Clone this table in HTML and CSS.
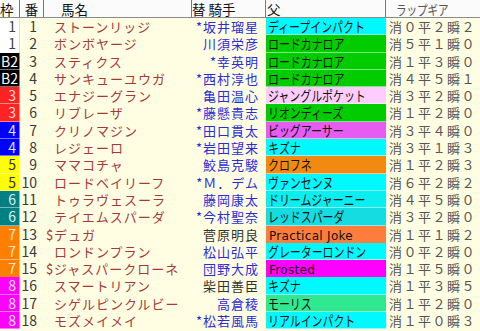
FILE: index.html
```html
<!DOCTYPE html>
<html lang="ja">
<head>
<meta charset="utf-8">
<link rel="stylesheet" href="styles.css">
</head>
<body>
<div class="table">
  <div class="row head">
    <div class="h waku-h">枠</div>
    <div class="h ban-h">番</div>
    <div class="h name-h">馬名</div>
    <div class="h jockey-h">替 騎手</div>
    <div class="h sire-h">父</div>
    <div class="h lap-h"><span class="narrow">ラップギア</span></div>
  </div>

  <div class="row"><div class="waku w1">1</div><div class="ban">1</div><div class="name"><span class="mk"></span>ストーンリッジ</div><div class="jockey">*坂井瑠星</div><div class="sire cyan"><span class="narrow">ディープインパクト</span></div><div class="lap">消０平２瞬２</div></div>
  <div class="row"><div class="waku w1">1</div><div class="ban">2</div><div class="name"><span class="mk"></span>ボンボヤージ</div><div class="jockey">川須栄彦</div><div class="sire green"><span class="narrow">ロードカナロア</span></div><div class="lap">消５平１瞬０</div></div>
  <div class="row"><div class="waku w2">B2</div><div class="ban">3</div><div class="name"><span class="mk"></span>スティクス</div><div class="jockey">*幸英明</div><div class="sire green"><span class="narrow">ロードカナロア</span></div><div class="lap">消１平３瞬０</div></div>
  <div class="row"><div class="waku w2">B2</div><div class="ban">4</div><div class="name"><span class="mk"></span>サンキューユウガ</div><div class="jockey">*西村淳也</div><div class="sire green"><span class="narrow">ロードカナロア</span></div><div class="lap">消４平５瞬１</div></div>
  <div class="row"><div class="waku w3">3</div><div class="ban">5</div><div class="name"><span class="mk"></span>エナジーグラン</div><div class="jockey">亀田温心</div><div class="sire pink"><span class="narrow">ジャングルポケット</span></div><div class="lap">消３平２瞬０</div></div>
  <div class="row"><div class="waku w3">3</div><div class="ban">6</div><div class="name"><span class="mk"></span>リブレーザ</div><div class="jockey">*藤懸貴志</div><div class="sire green"><span class="narrow">リオンディーズ</span></div><div class="lap">消１平２瞬０</div></div>
  <div class="row"><div class="waku w4">4</div><div class="ban">7</div><div class="name"><span class="mk"></span>クリノマジン</div><div class="jockey">*田口貫太</div><div class="sire violet"><span class="narrow">ビッグアーサー</span></div><div class="lap">消３平４瞬０</div></div>
  <div class="row"><div class="waku w4">4</div><div class="ban">8</div><div class="name"><span class="mk"></span>レジェーロ</div><div class="jockey">*岩田望来</div><div class="sire cyan"><span class="narrow">キズナ</span></div><div class="lap">消３平１瞬３</div></div>
  <div class="row"><div class="waku w5">5</div><div class="ban">9</div><div class="name"><span class="mk"></span>ママコチャ</div><div class="jockey">鮫島克駿</div><div class="sire orange"><span class="narrow">クロフネ</span></div><div class="lap">消１平２瞬３</div></div>
  <div class="row"><div class="waku w5">5</div><div class="ban">10</div><div class="name"><span class="mk"></span>ロードベイリーフ</div><div class="jockey">*Ｍ．デム</div><div class="sire cyan"><span class="narrow">ヴァンセンヌ</span></div><div class="lap">消６平２瞬２</div></div>
  <div class="row"><div class="waku w6">6</div><div class="ban">11</div><div class="name"><span class="mk"></span>トゥラヴェスーラ</div><div class="jockey">藤岡康太</div><div class="sire cyan2"><span class="narrow">ドリームジャーニー</span></div><div class="lap">消４平５瞬０</div></div>
  <div class="row"><div class="waku w6">6</div><div class="ban">12</div><div class="name"><span class="mk"></span>テイエムスパーダ</div><div class="jockey">*今村聖奈</div><div class="sire cyan3"><span class="narrow">レッドスパーダ</span></div><div class="lap">消３平２瞬０</div></div>
  <div class="row"><div class="waku w7">7</div><div class="ban">13</div><div class="name"><span class="mk">$</span>デュガ</div><div class="jockey black">菅原明良</div><div class="sire coral"><span class="latin">Practical Joke</span></div><div class="lap">消１平１瞬２</div></div>
  <div class="row"><div class="waku w7">7</div><div class="ban">14</div><div class="name"><span class="mk"></span>ロンドンプラン</div><div class="jockey">松山弘平</div><div class="sire cyan"><span class="narrow">グレーターロンドン</span></div><div class="lap">消０平２瞬０</div></div>
  <div class="row"><div class="waku w7">7</div><div class="ban">15</div><div class="name"><span class="mk">$</span>ジャスパークローネ</div><div class="jockey">団野大成</div><div class="sire magenta"><span class="latin">Frosted</span></div><div class="lap">消１平５瞬０</div></div>
  <div class="row"><div class="waku w8">8</div><div class="ban">16</div><div class="name"><span class="mk"></span>スマートリアン</div><div class="jockey black">柴田善臣</div><div class="sire cyan"><span class="narrow">キズナ</span></div><div class="lap">消１平３瞬５</div></div>
  <div class="row"><div class="waku w8">8</div><div class="ban">17</div><div class="name"><span class="mk"></span>シゲルピンクルビー</div><div class="jockey">高倉稜</div><div class="sire mint"><span class="narrow">モーリス</span></div><div class="lap">消１平２瞬０</div></div>
  <div class="row"><div class="waku w8">8</div><div class="ban">18</div><div class="name"><span class="mk"></span>モズメイメイ</div><div class="jockey">*松若風馬</div><div class="sire cyan"><span class="narrow">リアルインパクト</span></div><div class="lap">消１平０瞬３</div></div>
</div>
</body>
</html>
```

FILE: styles.css
```css
html, body {
  margin: 0;
  padding: 0;
}
body {
  background: #fffee2;
  font-family: "Noto Sans CJK JP", "DejaVu Sans", sans-serif;
  font-size: 13px;
  color: #333;
}
.table {
  width: 480px;
  height: 331px;
  overflow: hidden;
}
.row {
  display: grid;
  grid-template-columns: 20px 24px 148px 74px 120px 94px;
  height: 17.3px;
  line-height: 17px;
  white-space: nowrap;
}
.head {
  height: 18px;
  box-sizing: border-box;
  background: #fbfbfb;
  border-bottom: 1px solid #8a8a8a;
  color: #111;
  font-size: 13.5px;
}
.h {
  border-right: 1px solid #777;
  box-shadow: inset -1px 0 0 #fff;
  padding-top: 1px;
  line-height: 16px;
}
.lap-h {
  border-right: none;
  box-shadow: none;
  padding-left: 10px;
  color: #555;
}
.waku-h { text-align: left; }
.ban-h { text-align: center; }
.name-h { padding-left: 17px; }
.sire-h { padding-left: 1px; }

.waku {
  text-align: right;
  padding-right: 4px;
  box-shadow: inset 0 -1px 0 rgba(255,255,255,.45), inset -1px 0 0 rgba(255,255,255,.5);
  color: #fff;
  font-size: 14px;
}
.w1 { background: #ffffff; color: #444; box-shadow: inset -1px 0 0 #ddd; }
.w2 { background: #000000; color: #fff; padding-right: 2px; }
.w3 { background: #ff2424; color: #ffd6d6; }
.w4 { background: #0000ff; color: #dfe3ff; }
.w5 { background: #ffff00; color: #333; }
.w6 { background: #008080; color: #d8f0f0; }
.w7 { background: #ff7f00; color: #ffe8cc; }
.w8 { background: #ff00ff; color: #ffe0ff; }

.ban {
  text-align: right;
  padding-right: 7px;
  color: #3a3a3a;
  font-size: 14px;
}
.name {
  padding-left: 2px;
  color: #a33a3a;
  letter-spacing: 1px;
}
.mk {
  display: inline-block;
  width: 8px;
  letter-spacing: 0;
}
.jockey {
  text-align: right;
  padding-right: 7px;
  color: #2b2bd9;
  letter-spacing: 1px;
}
.jockey.black { color: #333; }
.sire {
  padding-left: 2px;
  color: #111;
  box-shadow: inset 0 -1px 0 rgba(255,255,255,.5);
  font-size: 14px;
}
.narrow {
  display: inline-block;
  transform: scaleX(0.78);
  transform-origin: left center;
}
.latin {
  font-family: "DejaVu Sans", sans-serif;
  font-size: 12px;
  letter-spacing: 0.3px;
  padding-left: 1px;
}
.cyan { background: #00f8ff; }
.cyan2 { background: #0aeef0; }
.cyan3 { background: #14dce0; }
.green { background: #00cc00; }
.pink { background: #ffccff; }
.violet { background: #e65cf0; }
.orange { background: #f28a12; }
.coral { background: #ff7d3c; }
.magenta { background: #ff00ff; }
.mint { background: #2fe890; }
.lap {
  padding-left: 3px;
  color: #555;
  letter-spacing: 1.5px;
}
```
